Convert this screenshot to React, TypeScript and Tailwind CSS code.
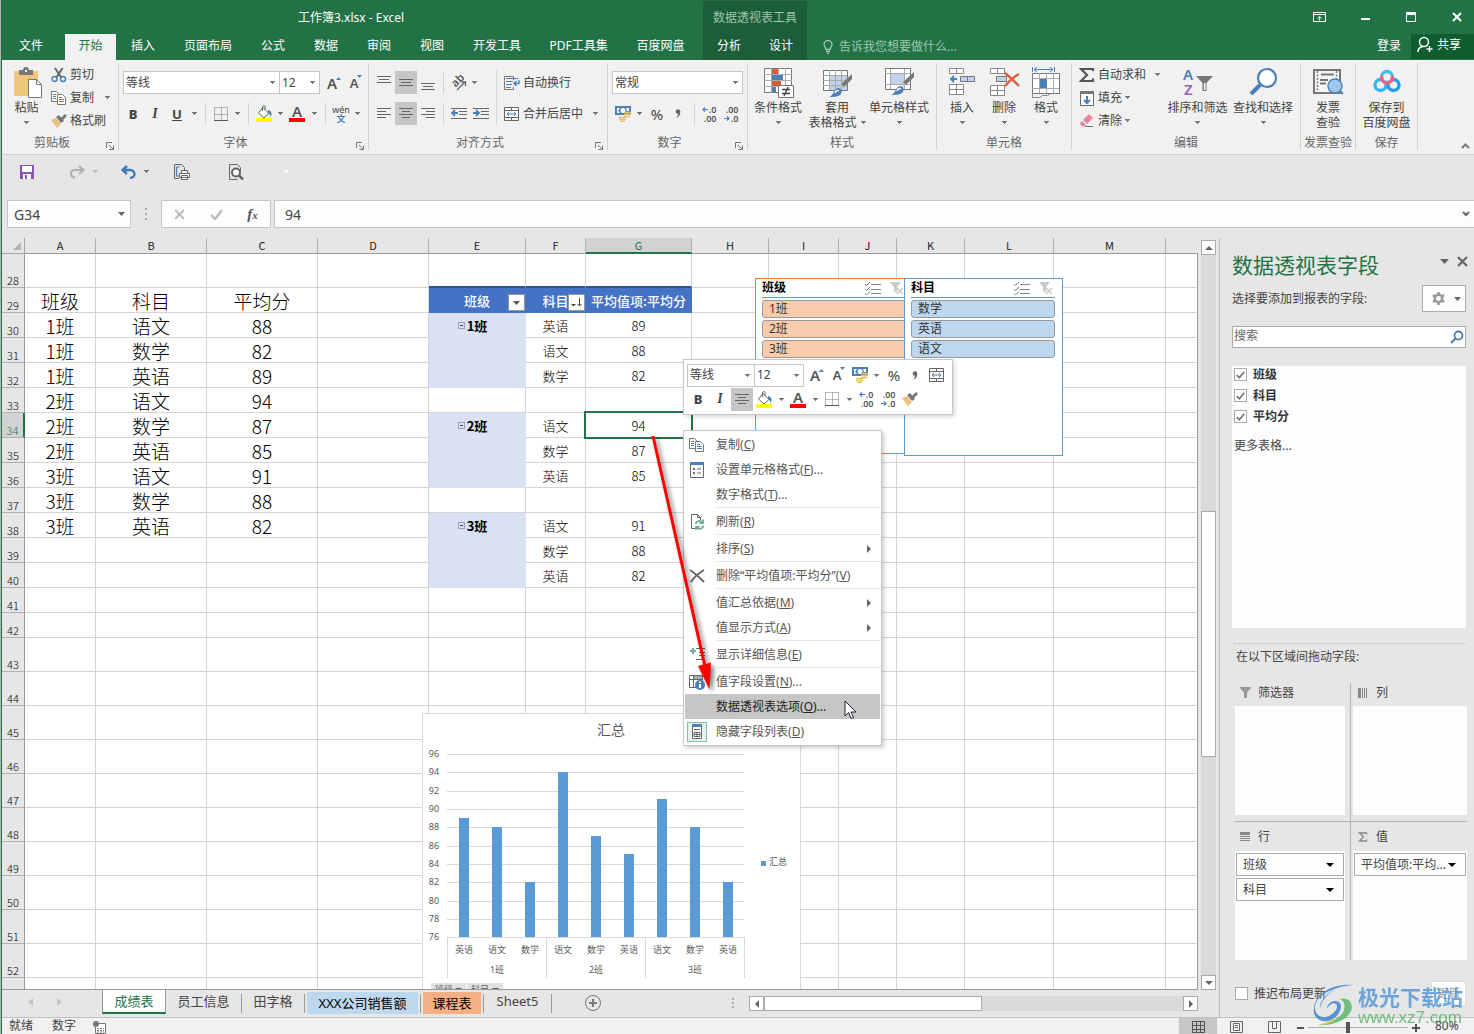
import { Fragment } from 'react';
import type { ReactNode } from 'react';

interface BoxProps {
  className?: string;
  children?: ReactNode;
}

/* ---------- small drawing helpers ---------- */

function Svg({ w = 16, h = 16, children, className = '' }: { w?: number; h?: number; children: ReactNode; className?: string }) {
  return (
    <svg width={w} height={h} viewBox={`0 0 ${w} ${h}`} fill="none" className={`shrink-0 ${className}`} aria-hidden="true">
      {children}
    </svg>
  );
}

function Caret({ className = 'text-[#777]' }: { className?: string }) {
  return (
    <svg width="5" height="3" viewBox="0 0 5 3" className={`shrink-0 ${className}`} shapeRendering="crispEdges" aria-hidden="true">
      <path d="M0 0h5v1H4v1H3v1H2V2H1V1H0z" fill="currentColor" />
    </svg>
  );
}

function BigCaret({ className = 'text-[#666]' }: { className?: string }) {
  return (
    <svg width="9" height="5" viewBox="0 0 9 5" className={`shrink-0 ${className}`} aria-hidden="true">
      <path d="M0 0h9L4.500 5z" fill="currentColor" />
    </svg>
  );
}

const PasteIcon = () => (
  <Svg w={32} h={32}>
    <path d="M3 4h24v25H3z" fill="#eec77d" />
    <path d="M8 3h4c0-4 6-4 6 0h4v5H8z" fill="#777" />
    <path d="M14 3h2v2h-2z" fill="#f1f1f1" />
    <path d="M17.500 12.500h8l5 5v13h-13z" fill="#fff" stroke="#777" />
    <path d="M25.500 12.500v5h5" stroke="#777" />
  </Svg>
);

const CutIcon = () => (
  <Svg>
    <path d="M4 1l6.500 10M11.500 1L5 11" stroke="#666" strokeWidth="2" />
    <circle cx="3.500" cy="12" r="2.500" stroke="#4a7fb8" strokeWidth="1.400" />
    <circle cx="12" cy="12" r="2.500" stroke="#4a7fb8" strokeWidth="1.400" />
  </Svg>
);

const CopyIcon = () => (
  <Svg>
    <path d="M.5 1.500h5l2 2v8h-7z" fill="#fff" stroke="#777" />
    <path d="M2 4.500h3M2 6.500h3M2 8.500h3" stroke="#4a7fb8" />
    <path d="M6.500 4.500h5l3 3v7h-8z" fill="#fff" stroke="#777" />
    <path d="M8 7.500h3M8 9.500h5M8 11.500h5" stroke="#4a7fb8" />
  </Svg>
);

const BrushIcon = () => (
  <Svg>
    <path d="M0 7l5-2 5 6-4 4z" fill="#eec07c" />
    <path d="M5 4l3-2 5 6-3 2z" fill="#777" />
    <path d="M10 5l4-4 2 2-4 4z" fill="#777" />
  </Svg>
);

const FontSizeIcon = ({ up }: { up: boolean }) => (
  <span className="relative pr-1 text-[#555]">
    <span className={up ? 'text-[15px] leading-5 font-semibold' : 'text-[13px] leading-6 font-semibold'}>A</span>
    <svg width="5" height="3" viewBox="0 0 5 3" className="absolute right-0 top-1" aria-hidden="true">
      <path d={up ? 'M0 3h5L2.500 0z' : 'M0 0h5L2.500 3z'} fill="#4a7fb8" />
    </svg>
  </span>
);

const BorderIcon = () => (
  <Svg w={14} h={14}>
    <path d="M.5.5h13v13M.5.5v13M7.500.5v13M.5 7.500h13" stroke="#777" strokeDasharray="1 1" />
    <path d="M0 13.500h14" stroke="#555" />
  </Svg>
);

const BucketIcon = () => (
  <Svg w={16} h={17}>
    <path d="M7 2.500l6 6-5 4.500-5.500-5z" fill="#fff" stroke="#666" />
    <path d="M6.500 6V1.500C7 .3 9 .3 9 1.500V5" stroke="#666" />
    <path d="M12 5c4 1 4 4 3 7-1-2-1-3-3-4z" fill="#4a7fb8" />
    <path d="M0 13h16v4H0z" fill="#ff0" />
  </Svg>
);

const FontColorIcon = () => (
  <span className="flex flex-col items-center">
    <span className="text-[15px] leading-[13px] font-semibold text-[#555]">A</span>
    <span className="h-1 w-4 bg-[#f00]" />
  </span>
);

const PhoneticIcon = () => (
  <span className="flex flex-col items-center text-[9px] leading-[9px]">
    <span className="text-[#444]">wén</span>
    <span className="font-bold text-[#4a7fb8]">文</span>
  </span>
);

const LinesIcon = ({ kind }: { kind: 'top' | 'middle' | 'bottom' | 'left' | 'center' | 'right' }) => {
  const paths = {
    top: 'M0 2.500h14M2 5.500h10M0 8.500h14',
    middle: 'M0 5.500h14M2 8.500h10M0 11.500h14',
    bottom: 'M0 9.500h14M2 12.500h10M0 15.500h14',
    left: 'M0 3.500h14M0 6.500h9M0 9.500h14M0 12.500h9',
    center: 'M0 3.500h14M3 6.500h8M0 9.500h14M3 12.500h8',
    right: 'M0 3.500h14M5 6.500h9M0 9.500h14M5 12.500h9',
  };
  return (
    <Svg w={14} h={17}>
      <path d={paths[kind]} stroke="#666" />
    </Svg>
  );
};

const OrientationIcon = () => (
  <Svg className="overflow-visible">
    <text x="1" y="10" fontSize="11" fill="#555" fontWeight="600" transform="rotate(-45 6 7)">ab</text>
    <path d="M6 15L14 7M10.500 7H14.500v4" stroke="#666" strokeWidth="1.300" />
  </Svg>
);

const IndentIcon = ({ out }: { out: boolean }) => (
  <Svg>
    <path d="M0 2.500h16M8 5.500h8M8 8.500h8M0 12.500h16" stroke="#666" />
    <path d={out ? 'M7 7H1M4 4L1 7l3 3' : 'M0 7h6M3 4l3 3-3 3'} stroke="#4a7fb8" strokeWidth="1.800" />
  </Svg>
);

const WrapIcon = () => (
  <Svg>
    <path d="M.5 5V1.500h9V5M.5 5.500v9h9V12" stroke="#777" />
    <path d="M2 3.500h12M2 6.500h7M2 9.500h6M2 12.500h5" stroke="#4a7fb8" />
    <path d="M15 5v3.500H10M12.500 6L10 8.500l2.500 2.500" stroke="#4a7fb8" strokeWidth="1.400" />
  </Svg>
);

const MergeIcon = () => (
  <Svg>
    <path d="M.5 1.500h14v13H.5zM.5 4.500h14M.5 11.500h14M7.500 1v3.500M7.500 11.500v3" fill="#fff" stroke="#666" />
    <path d="M3 8h9M5 6L3 8l2 2M10 6l2 2-2 2" stroke="#4a7fb8" />
  </Svg>
);

const MoneyIcon = () => (
  <Svg>
    <path d="M0 0h16v9H0z" fill="#4a7fb8" />
    <path d="M2 2h3L3 4.500 5 7H2zM11 2h3v3h-2z" fill="#fff" />
    <circle cx="8" cy="4.500" r="2.500" fill="#fff" />
    <path d="M9 6.500h7M9 8.500h7M9 10.500h6M4 11.500h7M4 13.500h7M5 15.500h5" stroke="#e8bd74" strokeWidth="1.700" />
  </Svg>
);

const DecimalIcon = ({ more }: { more: boolean }) => (
  <span className="relative flex w-[15px] flex-col items-end text-[9px] leading-[9px] font-semibold text-[#555]">
    <span>{more ? '.0' : '.00'}</span>
    <span>{more ? '.00' : '.0'}</span>
    <svg width="6" height="5" viewBox="0 0 6 5" fill="none" className={more ? 'absolute left-0 top-[2px]' : 'absolute bottom-[2px] left-0'} aria-hidden="true">
      <path d={more ? 'M6 2.500H1M3 .5l-2 2 2 2' : 'M0 2.500h5M3 .5l2 2-2 2'} stroke="#4a7fb8" strokeWidth="1.200" />
    </svg>
  </span>
);

const CondFormatIcon = () => (
  <Svg w={32} h={32}>
    <path d="M2.500 1.500h27v24h-27z" fill="#fff" stroke="#777" />
    <path d="M2 7.500h28M2 13.500h28M2 19.500h28M9.500 1v25M16.500 1v25M23.500 1v25" stroke="#aaa" />
    <path d="M10 2h6v5h-6zM10 14h9v5h-9z" fill="#d35f3c" />
    <path d="M10 8h11v5H10zM10 20h4v5h-4z" fill="#4a7fb8" />
    <path d="M16.500 18.500h15v12h-15z" fill="#fff" stroke="#777" />
    <path d="M20 22.500h8M20 26.500h8M26 20l-4 9" stroke="#444" strokeWidth="1.300" />
  </Svg>
);

const StyleBrush = () => (
  <>
    <path d="M31 7v5l-8 8-3-3z" fill="#777" />
    <path d="M20 17l3 3-2 2-3-3z" fill="#bbb" />
    <path d="M8 30c5-1 4-8 9-9 4 0 5 4 2 7-3 2-7 2-11 2z" fill="#4a7fb8" />
    <path d="M14 26c1-3 3-3 4-2" stroke="#fff" strokeWidth="1.500" />
  </>
);

const TableFormatIcon = () => (
  <Svg w={32} h={32}>
    <path d="M2.500 3.500h24v20h-24z" fill="#fff" stroke="#777" />
    <path d="M9 9h17v14H9z" fill="#c0d3ea" />
    <path d="M2 8.500h24M2 13.500h24M2 18.500h24M8.500 3v20M14.500 3v20M20.500 3v20" stroke="#aaa" />
    <StyleBrush />
  </Svg>
);

const CellStyleIcon = () => (
  <Svg w={32} h={32}>
    <path d="M2.500 1.500h25v21h-25z" fill="#fff" stroke="#777" />
    <path d="M2 6.500h25M2 17.500h25M7.500 2v20M21.500 2v20" stroke="#aaa" />
    <path d="M8 7h13v10H8z" fill="#c0d3ea" />
    <g transform="translate(0 -2)">
      <StyleBrush />
    </g>
  </Svg>
);

const InsertIcon = () => (
  <Svg w={32} h={32}>
    <path d="M3.500 1.500h14v5h-14zM10.500 1.500v5M3.500 17.500h14v10h-14zM10.500 17.500v10M3.500 22.500h14" fill="#fff" stroke="#888" />
    <path d="M14.500 9.500h14v5h-14zM21.500 9.500v5" fill="#c0d3ea" stroke="#777" />
    <path d="M11 12H5M8 9l-3 3 3 3" stroke="#4a7fb8" strokeWidth="1.800" />
  </Svg>
);

const DeleteIcon = () => (
  <Svg w={32} h={32}>
    <path d="M2.500 1.500h14v5h-14zM9.500 1.500v5M2.500 18.500h14v10h-14zM9.500 18.500v10M2.500 23.500h14" fill="#fff" stroke="#888" />
    <path d="M8.500 9.500h10v5h-10z" fill="#c0d3ea" stroke="#777" />
    <path d="M17 6c5 4 9 8 14 13M31 7c-6 3-10 7-14 12" stroke="#d9603f" strokeWidth="2.400" />
  </Svg>
);

const FormatIcon = () => (
  <Svg w={32} h={32}>
    <path d="M2.500 0v5M24.500 0v5M4 2.500h19M7 0L4 2.500 7 5M20 0l3 2.500L20 5" stroke="#4a7fb8" />
    <path d="M2.500 6.500h27v20h-27z" fill="#fff" stroke="#777" />
    <path d="M2 11.500h27M2 21.500h27M9.500 6v20M16.500 6v20M23.500 6v20" stroke="#aaa" />
    <path d="M10 12h7v9h-7z" fill="#4a7fb8" />
    <path d="M2.500 27v3.500h7l3-2h5l3-2" stroke="#888" />
  </Svg>
);

const SumIcon = () => (
  <Svg>
    <path d="M14 4V2H2l6 6-6 6h12v-2.500" stroke="#555" strokeWidth="2.200" />
  </Svg>
);

const FillIcon = () => (
  <Svg>
    <path d="M1.500 1.500h13v14h-13z" fill="#fff" stroke="#666" />
    <path d="M1 1h14v3H1z" fill="#777" />
    <path d="M8 6v7M5 10l3 3 3-3" stroke="#4a7fb8" strokeWidth="2" />
  </Svg>
);

const EraserIcon = () => (
  <Svg>
    <path d="M4 7l6-6 4 4-6 6z" fill="#e5879a" />
    <path d="M3 8l4 4-1.500 1.500h-2L1 11v-1z" fill="#e5879a" />
    <path d="M6 13.500h8" stroke="#777" />
  </Svg>
);

const SortFilterIcon = () => (
  <Svg w={32} h={32} className="overflow-visible">
    <text x="1" y="13" fontSize="15" fontWeight="600" fill="#4a7fb8">A</text>
    <text x="2" y="28" fontSize="15" fontWeight="600" fill="#9a5fbb">Z</text>
    <path d="M14 9h17l-6.500 7v8h-4v-8z" fill="#777" />
    <path d="M22 16h1.500v7H22z" fill="#fff" />
  </Svg>
);

const FindIcon = () => (
  <Svg w={32} h={32}>
    <circle cx="20" cy="11" r="9" fill="#fff" stroke="#4a7fb8" strokeWidth="2.200" />
    <path d="M13 18L4 27" stroke="#4a7fb8" strokeWidth="4" />
  </Svg>
);

const InvoiceIcon = () => (
  <Svg w={32} h={32}>
    <path d="M2 3h26v23H2z" fill="#f6f6f6" stroke="#777" strokeWidth="2" />
    <path d="M5.500 4v22M24.500 4v22" stroke="#777" strokeWidth="1.500" strokeDasharray="2 1.500" />
    <path d="M9 7.500h13M8 13h8M8 16.500h6" stroke="#777" strokeWidth="2" />
    <circle cx="23" cy="19" r="7" fill="#9fc6ef" stroke="#4a86ba" strokeWidth="1.500" />
    <path d="M28 24l3 3" stroke="#4a86ba" strokeWidth="2" />
  </Svg>
);

const NetdiskIcon = () => (
  <Svg w={32} h={32}>
    <circle cx="9.500" cy="18" r="5.500" stroke="#35b6f2" strokeWidth="3.400" />
    <circle cx="22.500" cy="18" r="5.500" stroke="#1e9df5" strokeWidth="3.400" />
    <circle cx="16" cy="10" r="5.500" fill="#f1f1f1" stroke="#3fc0ee" strokeWidth="3.400" />
    <path d="M10.700 9a5.500 5.500 0 1 0 10.600 0" stroke="#f4617c" strokeWidth="3.400" />
  </Svg>
);

const SearchIcon = () => (
  <Svg w={14} h={14}>
    <circle cx="8.500" cy="5.500" r="4" stroke="#4a7fb8" strokeWidth="1.800" />
    <path d="M5.500 8.500L1 13" stroke="#4a7fb8" strokeWidth="2.200" />
  </Svg>
);

/* ---------- title bar and tabs ---------- */

const tabs = ['插入', '页面布局', '公式', '数据', '审阅', '视图', '开发工具'];

function Header() {
  return (
    <header className="shrink-0 bg-[#217346] text-white">
      <div className="flex h-[34px] items-center">
        <div className="w-[701px] shrink-0 pl-[296px] pt-px">工作簿3.xlsx - Excel</div>
        <div className="mt-px flex h-[33px] w-[104px] shrink-0 items-center justify-center bg-[#1c5e38] text-[#9fc5ad]">数据透视表工具</div>
        <div className="flex-1" />
        <button aria-label="功能区显示选项" className="flex w-[46px] justify-center">
          <Svg w={13} h={10}>
            <path d="M.5.500h12v9H.5zM.5 2.500h12M6.500 8.500v-4M4.500 6.500l2-2 2 2" stroke="#fff" />
          </Svg>
        </button>
        <button aria-label="最小化" className="flex w-[46px] justify-center"><span className="mt-1 h-0.5 w-[9px] bg-white" /></button>
        <button aria-label="最大化" className="flex w-[46px] justify-center"><span className="h-[10px] w-[10px] border border-t-[3px] border-white" /></button>
        <button aria-label="关闭" className="ml-[6px] flex w-[34px] justify-center">
          <Svg w={10} h={10}>
            <path d="M1 1l8 8M9 1L1 9" stroke="#fff" strokeWidth="2" />
          </Svg>
        </button>
      </div>
      <nav className="flex h-[26px]">
        <button className="w-[63px] shrink-0 pb-[3px] pl-[17px] text-left">文件</button>
        <button className="w-[51px] shrink-0 bg-[#f1f1f1] pb-[3px] text-[#217346]">开始</button>
        {tabs.map((tab) => (
          <button key={tab} className="shrink-0 pb-[3px] pl-[15px] pr-[14px]">{tab}</button>
        ))}
        <button className="w-[87px] shrink-0 pb-[3px]">PDF工具集</button>
        <button className="w-[81px] shrink-0 pb-[3px] pr-1">百度网盘</button>
        <button className="w-[52px] shrink-0 bg-[#1c5e38] pb-[3px]">分析</button>
        <button className="w-[52px] shrink-0 bg-[#1c5e38] pb-[3px]">设计</button>
        <button className="ml-4 flex items-center gap-[6px] text-[#9fc5ad]">
          <Svg w={10} h={14}>
            <path d="M3 9.500C3 7.500 1 7 1 4.500a4 4 0 0 1 8 0C9 7 7 7.500 7 9.500zM3 11.500h4M4 13.500h2" stroke="#9fc5ad" strokeWidth="1.300" />
          </Svg>
          告诉我您想要做什么...
        </button>
        <div className="flex-1" />
        <button className="pb-[3px] pr-[10px]">登录</button>
        <button className="mb-px flex w-[63px] shrink-0 items-center gap-1 bg-[#0f5c2f] pb-1 pl-[6px]">
          <Svg w={16} h={17}>
            <circle cx="7" cy="6" r="4.500" stroke="#fff" strokeWidth="1.500" />
            <path d="M1 16c0-3 2-5 5-5.500M12.500 10v6M9.500 13h6" stroke="#fff" strokeWidth="1.500" />
          </Svg>
          共享
        </button>
      </nav>
    </header>
  );
}

/* ---------- ribbon ---------- */

function Group({ label, width, launcher = false, children }: { label: string; width: string; launcher?: boolean; children: ReactNode }) {
  return (
    <section className={`mb-1 mt-[3px] flex shrink-0 flex-col border-r border-[#d2d2d2] ${width}`}>
      <div className="flex h-[72px]">{children}</div>
      <div className="flex h-4 items-end">
        <span className="flex-1 whitespace-nowrap text-center leading-[14px] text-[#666]">{label}</span>
        {launcher && (
          <button aria-label={`${label}设置`} className="ml-1 mr-1">
            <Svg w={8} h={8}>
              <path d="M.5 6V.500H6M3 3l4 4M7.500 3.500v4h-4" stroke="#777" />
            </Svg>
          </button>
        )}
      </div>
    </section>
  );
}

function BigButton({ icon, lines, width, caret = true }: { icon: ReactNode; lines: string[]; width: string; caret?: boolean }) {
  return (
    <button className={`flex shrink-0 flex-col items-center whitespace-nowrap pt-1 leading-[15px] ${width}`}>
      {icon}
      <span className="mt-px">{lines[0]}</span>
      <span className="flex h-[15px] items-center gap-1">
        {lines[1]}
        {caret && <Caret />}
      </span>
    </button>
  );
}

function SmallButton({ icon, label, children }: { icon: ReactNode; label: string; children?: ReactNode }) {
  return (
    <button className="flex h-[23px] items-center gap-[3px] whitespace-nowrap">
      {icon}
      {label}
      {children}
    </button>
  );
}

function Tool({ label, className = 'w-[22px]', children }: BoxProps & { label: string }) {
  return (
    <button aria-label={label} className={`flex h-[23px] shrink-0 items-center justify-center ${className}`}>
      {children}
    </button>
  );
}

function Combo({ label, value, className }: { label: string; value: string; className: string }) {
  return (
    <span className={`relative flex h-[23px] shrink-0 items-center border border-[#c6c6c6] bg-white ${className}`}>
      <select aria-label={label} className="h-full w-full appearance-none bg-transparent pl-0.5 pr-4 leading-4 outline-none">
        <option>{value}</option>
      </select>
      <span className="pointer-events-none absolute right-1"><Caret /></span>
    </span>
  );
}

const Sep = ({ className }: { className: string }) => <span className={`h-[22px] w-px shrink-0 bg-[#d2d2d2] ${className}`} />;

const Bold = () => <span className="text-[13px] font-extrabold text-[#444]">B</span>;
const Italic = () => <span className="font-['Liberation_Serif',serif] text-[14px] font-bold italic text-[#444]">I</span>;
const Percent = () => <span className="text-[15px] text-[#444]">%</span>;
const Comma = () => (
  <Svg w={6} h={9}>
    <circle cx="3" cy="2.500" r="2.300" fill="#666" />
    <path d="M5.300 2.500C5.300 6 4 8 1 9c1.500-1.500 2-3 2-4.500z" fill="#666" />
  </Svg>
);

function Ribbon() {
  return (
    <div className="flex h-[95px] shrink-0 border-b border-[#d2d2d2] bg-[#f1f1f1] text-[#444]">
      <Group label="剪贴板" width="w-[117px]" launcher>
        <BigButton icon={<PasteIcon />} lines={['粘贴']} width="w-[49px]" />
        <div className="flex flex-col">
          <SmallButton icon={<CutIcon />} label="剪切" />
          <SmallButton icon={<CopyIcon />} label="复制"><span className="ml-2"><Caret /></span></SmallButton>
          <SmallButton icon={<BrushIcon />} label="格式刷" />
        </div>
      </Group>

      <Group label="字体" width="w-[250px]" launcher>
        <div className="flex flex-col gap-2 pt-2">
          <div className="flex pl-1">
            <Combo label="字体" value="等线" className="w-[157px]" />
            <Combo label="字号" value="12" className="-ml-px mr-[3px] w-[41px]" />
            <Tool label="增大字号"><FontSizeIcon up /></Tool>
            <Tool label="减小字号"><FontSizeIcon up={false} /></Tool>
          </div>
          <div className="flex items-center pl-[3px]">
            <Tool label="加粗"><Bold /></Tool>
            <Tool label="倾斜"><Italic /></Tool>
            <Tool label="下划线"><span className="text-[13px] font-bold underline">U</span></Tool>
            <Tool label="下划线选项" className="w-3"><Caret /></Tool>
            <Sep className="mx-[5px]" />
            <Tool label="边框" className="w-5"><BorderIcon /></Tool>
            <Tool label="边框选项" className="w-3"><Caret /></Tool>
            <Sep className="mx-[5px]" />
            <Tool label="填充颜色" className="w-5"><BucketIcon /></Tool>
            <Tool label="填充颜色选项" className="w-3"><Caret /></Tool>
            <Tool label="字体颜色"><FontColorIcon /></Tool>
            <Tool label="字体颜色选项" className="w-3"><Caret /></Tool>
            <Sep className="mx-[5px]" />
            <Tool label="拼音" className="w-5"><PhoneticIcon /></Tool>
            <Tool label="拼音选项" className="w-3"><Caret /></Tool>
          </div>
        </div>
      </Group>

      <Group label="对齐方式" width="w-[239px]" launcher>
        <div className="flex w-[127px] flex-col gap-2 pl-1 pt-2">
          <div className="flex items-center">
            <Tool label="顶端对齐"><LinesIcon kind="top" /></Tool>
            <Tool label="垂直居中" className="w-[22px] bg-[#c6c6c6]"><LinesIcon kind="middle" /></Tool>
            <Tool label="底端对齐"><LinesIcon kind="bottom" /></Tool>
            <Sep className="mx-1" />
            <Tool label="方向"><OrientationIcon /></Tool>
            <Tool label="方向选项" className="w-2"><Caret /></Tool>
          </div>
          <div className="flex items-center">
            <Tool label="左对齐"><LinesIcon kind="left" /></Tool>
            <Tool label="居中" className="w-[22px] bg-[#c6c6c6]"><LinesIcon kind="center" /></Tool>
            <Tool label="右对齐"><LinesIcon kind="right" /></Tool>
            <Sep className="mx-1" />
            <Tool label="减少缩进量"><IndentIcon out /></Tool>
            <Tool label="增加缩进量"><IndentIcon out={false} /></Tool>
          </div>
        </div>
        <span className="mt-[7px] h-[55px] w-px bg-[#d9d9d9]" />
        <div className="flex flex-col gap-2 pl-[7px] pt-2">
          <SmallButton icon={<WrapIcon />} label="自动换行" />
          <SmallButton icon={<MergeIcon />} label="合并后居中"><span className="ml-[7px]"><Caret /></span></SmallButton>
        </div>
      </Group>

      <Group label="数字" width="w-[140px]" launcher>
        <div className="flex flex-col gap-2 pl-1 pt-2">
          <Combo label="数字格式" value="常规" className="w-[131px]" />
          <div className="flex items-center">
            <Tool label="会计数字格式"><MoneyIcon /></Tool>
            <Tool label="会计数字格式选项" className="w-[10px]"><Caret /></Tool>
            <Tool label="百分比样式" className="w-[26px]"><Percent /></Tool>
            <Tool label="千位分隔样式" className="w-4"><Comma /></Tool>
            <Sep className="ml-2 mr-[3px]" />
            <Tool label="增加小数位数"><DecimalIcon more /></Tool>
            <Tool label="减少小数位数"><DecimalIcon more={false} /></Tool>
          </div>
        </div>
      </Group>

      <Group label="样式" width="w-[189px]">
        <BigButton icon={<CondFormatIcon />} lines={['条件格式']} width="w-[60px]" />
        <BigButton icon={<TableFormatIcon />} lines={['套用', '表格格式']} width="w-[58px]" />
        <BigButton icon={<CellStyleIcon />} lines={['单元格样式']} width="w-[66px]" />
      </Group>

      <Group label="单元格" width="w-[135px]">
        <div className="flex pl-1">
          <BigButton icon={<InsertIcon />} lines={['插入']} width="w-[42px]" />
          <BigButton icon={<DeleteIcon />} lines={['删除']} width="w-[42px]" />
          <BigButton icon={<FormatIcon />} lines={['格式']} width="w-[42px]" />
        </div>
      </Group>

      <Group label="编辑" width="w-[229px]">
        <div className="flex w-[93px] flex-col pl-[7px]">
          <SmallButton icon={<SumIcon />} label="自动求和"><span className="ml-[6px]"><Caret /></span></SmallButton>
          <SmallButton icon={<FillIcon />} label="填充"><Caret /></SmallButton>
          <SmallButton icon={<EraserIcon />} label="清除"><Caret /></SmallButton>
        </div>
        <BigButton icon={<SortFilterIcon />} lines={['排序和筛选']} width="w-[65px]" />
        <BigButton icon={<FindIcon />} lines={['查找和选择']} width="w-[66px]" />
      </Group>

      <Group label="发票查验" width="w-[55px]">
        <BigButton icon={<InvoiceIcon />} lines={['发票', '查验']} width="w-[54px]" caret={false} />
      </Group>

      <Group label="保存" width="w-[62px]">
        <BigButton icon={<NetdiskIcon />} lines={['保存到', '百度网盘']} width="w-[61px]" caret={false} />
      </Group>

      <div className="flex flex-1 items-end justify-end pb-[5px] pr-1">
        <button aria-label="折叠功能区">
          <Svg w={9} h={6}>
            <path d="M1 5l3.500-3.500L8 5" stroke="#777" strokeWidth="2" />
          </Svg>
        </button>
      </div>
    </div>
  );
}

/* ---------- quick access and formula bar ---------- */

function QuickAccess() {
  return (
    <div className="flex h-[45px] shrink-0 items-start pl-[17px] pt-[5px]">
      <Tool label="保存" className="w-4">
        <Svg w={14} h={14}>
          <path d="M0 0h14v14H0z" fill="#8a55ac" />
          <path d="M2 1h10v6H2zM3 9h8v5H3z" fill="#fff" />
          <path d="M5 10h2v4H5z" fill="#8a55ac" />
        </Svg>
      </Tool>
      <Tool label="恢复" className="ml-[34px] w-4 text-[#b1b1b1]">
        <Svg w={15} h={14}>
          <path d="M9 1l4.500 4L9 9M13 5H5C0 5-1 12 5 12.500" stroke="currentColor" strokeWidth="2.200" />
        </Svg>
      </Tool>
      <Tool label="恢复选项" className="ml-[2px] w-4"><Caret className="text-[#b9b9b9]" /></Tool>
      <Tool label="撤消" className="ml-[17px] w-4">
        <Svg w={15} h={14}>
          <path d="M6 1L1.500 5 6 9M2 5h7c6 0 6 8 0 8" stroke="#3d7ab5" strokeWidth="2.400" />
        </Svg>
      </Tool>
      <Tool label="撤消选项" className="ml-[2px] w-4"><Caret /></Tool>
      <Tool label="打印" className="ml-5 w-4">
        <Svg>
          <path d="M.5.500h7l3 3V7M.5.500v14H5" stroke="#666" />
          <path d="M2.500 3v9H6M2.500 3H6" stroke="#4a7fb8" strokeWidth="1.200" />
          <path d="M5.500 9.500h10v4h-10zM7.500 6.500h6v3h-6zM7.500 11.500h6v4h-6z" fill="#fff" stroke="#666" />
        </Svg>
      </Tool>
      <Tool label="打印预览" className="ml-[38px] w-4">
        <Svg>
          <path d="M1.500.500h8l3 3v4M1.500.500v15h8" stroke="#666" />
          <circle cx="8" cy="8.500" r="4" fill="#fff" stroke="#666" strokeWidth="2" />
          <path d="M11 11.500l4 4" stroke="#666" strokeWidth="2.500" />
        </Svg>
      </Tool>
      <Tool label="自定义快速访问工具栏" className="ml-[34px] w-4"><Caret className="text-white" /></Tool>
    </div>
  );
}

function FormulaBar() {
  return (
    <div className="mb-[10px] flex h-7 shrink-0 text-[14px] text-[#444]">
      <div className="relative ml-[5px] w-[124px]">
        <input aria-label="名称框" defaultValue="G34" className="h-full w-full border border-[#c6c6c6] bg-[#fdfdfd] pl-[6px] outline-none" />
        <button aria-label="名称框选项" className="absolute right-[6px] top-3">
          <svg width="7" height="4" viewBox="0 0 7 4" aria-hidden="true"><path d="M0 0h7L3.500 4z" fill="#666" /></svg>
        </button>
      </div>
      <div className="flex w-[30px] flex-col items-center justify-center gap-[3px]">
        {[0, 1, 2].map((n) => <span key={n} className="size-[2px] bg-[#aaa]" />)}
      </div>
      <div className="flex w-[110px] items-center justify-around border border-[#c6c6c6] bg-[#fdfdfd]">
        <button aria-label="取消">
          <Svg w={11} h={11}><path d="M1 1l9 9M10 1l-9 9" stroke="#bbb" strokeWidth="1.800" /></Svg>
        </button>
        <button aria-label="输入">
          <Svg w={13} h={11}><path d="M1 6l4 4 7-9" stroke="#bbb" strokeWidth="2.400" /></Svg>
        </button>
        <button aria-label="插入函数" className="font-['Liberation_Serif',serif] text-[15px] font-bold italic leading-4 text-[#555]">
          f<span className="text-[11px]">x</span>
        </button>
      </div>
      <div className="relative ml-[3px] flex-1">
        <input aria-label="编辑栏" defaultValue="94" className="h-full w-full border border-r-0 border-[#c6c6c6] bg-[#fdfdfd] pl-[10px] outline-none" />
        <button aria-label="展开编辑栏" className="absolute right-1 top-[11px]">
          <Svg w={8} h={6}><path d="M1 1l3 3 3-3" stroke="#666" strokeWidth="2" /></Svg>
        </button>
      </div>
    </div>
  );
}

/* ---------- worksheet ---------- */

const columns = [
  { id: 'A', width: 'w-[71px]' },
  { id: 'B', width: 'w-[111px]' },
  { id: 'C', width: 'w-[111px]' },
  { id: 'D', width: 'w-[111px]' },
  { id: 'E', width: 'w-[97px]' },
  { id: 'F', width: 'w-[60px]' },
  { id: 'G', width: 'w-[106px]' },
  { id: 'H', width: 'w-[77px]' },
  { id: 'I', width: 'w-[70px]' },
  { id: 'J', width: 'w-[58px]' },
  { id: 'K', width: 'w-[68px]' },
  { id: 'L', width: 'w-[89px]' },
  { id: 'M', width: 'w-[112px]' },
  { id: '', width: '' },
];

const data: Record<number, string[]> = {
  29: ['班级', '科目', '平均分', '', '班级', '科目', '平均值项:平均分'],
  30: ['1班', '语文', '88', '', '1班', '英语', '89'],
  31: ['1班', '数学', '82', '', '', '语文', '88'],
  32: ['1班', '英语', '89', '', '', '数学', '82'],
  33: ['2班', '语文', '94'],
  34: ['2班', '数学', '87', '', '2班', '语文', '94'],
  35: ['2班', '英语', '85', '', '', '数学', '87'],
  36: ['3班', '语文', '91', '', '', '英语', '85'],
  37: ['3班', '数学', '88'],
  38: ['3班', '英语', '82', '', '3班', '语文', '91'],
  39: ['', '', '', '', '', '数学', '88'],
  40: ['', '', '', '', '', '英语', '82'],
};

const rowNumbers = Array.from({ length: 26 }, (_, i) => 28 + i);

function cellClass(row: number, col: number) {
  if (col > 3 && col < 7) {
    if (row === 28) return 'border-b-2 border-r-[#d4d4d4] border-b-[#2f5597]';
    if (row === 29) return 'border-[#4472c4] bg-[#4472c4] text-[13px] font-medium text-white';
  }
  const pivotRow = row >= 30 && row <= 40 && row !== 33 && row !== 37;
  if (col === 4 && pivotRow) return 'border-[#d9e1f2] bg-[#d9e1f2] text-[13px] font-bold';
  if (col > 4) return 'border-[#d4d4d4] text-[13px] font-light';
  return 'border-[#d4d4d4] text-[19px] font-light';
}

function CellContent({ row, col, text }: { row: number; col: number; text: string }) {
  if (row === 29 && (col === 4 || col === 5)) {
    return (
      <span className="relative block">
        {text}
        <button aria-label={`筛选${text}`} className="absolute right-0 top-1 flex size-[17px] items-center justify-center border border-[#999] bg-white">
          {col === 4 ? (
            <svg width="7" height="4" viewBox="0 0 7 4" aria-hidden="true"><path d="M0 0h7L3.500 4z" fill="#555" /></svg>
          ) : (
            <Svg w={11} h={9}>
              <path d="M0 6h5L2.500 8.500z" fill="#444" />
              <path d="M8.500 0v8M6.500 6l2 2 2-2" stroke="#444" />
            </Svg>
          )}
        </button>
      </span>
    );
  }
  if (col === 4 && text && row > 29) {
    return (
      <span className="relative">
        <button aria-label={`折叠${text}`} className="absolute -left-[9px] top-[6px] flex size-[7px] items-center justify-center border border-[#9aa5bd]">
          <span className="h-px w-[3px] bg-[#444]" />
        </button>
        {text}
      </span>
    );
  }
  return <>{text}</>;
}

function Grid() {
  return (
    <table className="w-full table-fixed border-separate border-spacing-0 font-['Noto_Sans_CJK_SC',sans-serif] text-black">
      <colgroup>
        <col className="w-[23px]" />
        {columns.map((c) => <col key={c.id} className={c.width} />)}
      </colgroup>
      <thead>
        <tr className="h-4 bg-[#e6e6e6] text-[11px] leading-[15px] text-[#222]">
          <th aria-label="全选" className="border-b border-r border-[#a6a6a6] p-0">
            <svg width="8" height="8" viewBox="0 0 8 8" className="ml-[11px]" aria-hidden="true"><path d="M8 0v8H0z" fill="#b1b1b1" /></svg>
          </th>
          {columns.map((c, i) => (
            <th
              key={c.id}
              scope="col"
              className={
                c.id === 'G'
                  ? 'border-b-2 border-r border-b-[#217346] border-r-[#b0b0b0] bg-[#d2d2d2] p-0 font-normal leading-[14px] text-[#217346]'
                  : i === 13
                    ? 'border-b border-[#999] p-0'
                    : 'border-b border-r border-b-[#999] border-r-[#b0b0b0] p-0 font-normal'
              }
            >
              {c.id}
            </th>
          ))}
        </tr>
      </thead>
      <tbody>
        {rowNumbers.map((row) => (
          <tr key={row} className={row === 28 || row > 42 ? 'h-[34px]' : 'h-[25px]'}>
            <th
              scope="row"
              className={
                row === 34
                  ? 'border-b border-r-2 border-b-[#b1b1b1] border-r-[#217346] bg-[#d2d2d2] p-0 align-bottom text-[11px] font-light leading-[13px] text-[#217346]'
                  : 'border-b border-r border-b-[#b1b1b1] border-r-[#999] bg-[#e6e6e6] p-0 align-bottom text-[11px] font-light leading-[13px]'
              }
            >
              {row < 53 ? row : ''}
            </th>
            {columns.map((c, col) => (
              <td
                key={c.id}
                className={`whitespace-nowrap border-b border-r p-0 pt-[2px] text-center leading-[22px] ${cellClass(row, col)} ${col === 13 ? 'border-r-[#999]' : ''}`}
              >
                <CellContent row={row} col={col} text={data[row]?.[col] ?? ''} />
              </td>
            ))}
          </tr>
        ))}
      </tbody>
    </table>
  );
}

interface SlicerProps {
  title: string;
  items: string[];
  frame: string;
  line: string;
  fill: string;
}

function Slicer({ title, items, frame, line, fill }: SlicerProps) {
  return (
    <section className={`absolute top-10 w-[159px] border bg-white pl-[6px] pr-[7px] ${frame}`}>
      <div className={`mb-[2px] flex h-[19px] items-center border-b font-bold text-black ${line}`}>
        <span className="flex-1">{title}</span>
        <Svg w={16} h={13} className="mr-[9px]">
          <path d="M0 2l1.500 1.500L5 0M0 7l1.500 1.500L5 5M0 11.500L1.500 13 5 9.500" stroke="#777" />
          <path d="M6 2.500h10M6 7.500h10M6 11.500h10" stroke="#888" />
        </Svg>
        <Svg w={14} h={13} className="mr-[2px]">
          <path d="M0 0h11L7 5v6L4 9V5z" fill="#c9c9c9" />
          <path d="M7 6l6 6M13 6l-6 6" stroke="#c9c9c9" strokeWidth="1.500" />
        </Svg>
      </div>
      <div className="flex flex-col gap-[2px]">
        {items.map((item) => (
          <button key={item} className={`h-[18px] rounded-[3px] border border-[#999] pl-[6px] text-left leading-4 text-[#333] ${fill}`}>{item}</button>
        ))}
      </div>
    </section>
  );
}

const bars = [
  ['英语', 89], ['语文', 88], ['数学', 82],
  ['语文', 94], ['数学', 87], ['英语', 85],
  ['语文', 91], ['数学', 88], ['英语', 82],
] as const;

function PivotChart() {
  return (
    <figure className="absolute left-[420px] top-[475px] w-[379px] border border-[#d9d9d9] bg-white">
      <svg width="377" height="290" viewBox="1 1 377 290" className="block text-[9px]" fill="#595959" textAnchor="middle">
        <text x="189" y="22" fontSize="14">汇总</text>
        {Array.from({ length: 11 }, (_, i) => {
          const y = Math.round(41 + i * 18.33);
          return (
            <Fragment key={i}>
              <path d={`M25 ${y + 0.5}h297`} stroke="#d9d9d9" />
              <text x="12" y={y + 3}>{96 - i * 2}</text>
            </Fragment>
          );
        })}
        {bars.map(([name, value], i) => {
          const h = Math.round((value - 76) * 9.17);
          return (
            <Fragment key={i}>
              <rect x={37 + i * 33} y={224 - h} width="10" height={h} fill="#5b9bd5" />
              <text x={42 + i * 33} y="240">{name}</text>
            </Fragment>
          );
        })}
        <path d="M25.500 224v41M124.500 224v41M223.500 224v41M322.500 224v41" stroke="#d9d9d9" />
        {['1班', '2班', '3班'].map((name, i) => <text key={name} x={75 + i * 99} y="260">{name}</text>)}
        <rect x="339" y="148" width="5" height="5" fill="#5b9bd5" />
        <text x="356" y="152">汇总</text>
        <rect x="9" y="270" width="35" height="14" fill="#e0e0e0" />
        <rect x="45" y="270" width="36" height="14" fill="#e0e0e0" />
        <text x="22" y="280">班级</text>
        <text x="58" y="280">科目</text>
        <path d="M33 275h7l-3.500 3zM70 275h7l-3.500 3z" />
      </svg>
    </figure>
  );
}

function MiniToolbar() {
  return (
    <div role="toolbar" aria-label="浮动工具栏" className="absolute left-[681px] top-[121px] w-[270px] border border-[#c6c6c6] bg-white px-[3px] py-[3px] text-[#444] shadow-[2px_2px_4px_rgba(0,0,0,0.15)]">
      <div className="flex h-6 items-center">
        <Combo label="浮动字体" value="等线" className="w-[68px]" />
        <Combo label="浮动字号" value="12" className="-ml-px w-[50px]" />
        <Tool label="增大字号" className="ml-[2px] w-[22px]"><FontSizeIcon up /></Tool>
        <Tool label="减小字号"><FontSizeIcon up={false} /></Tool>
        <Tool label="会计数字格式" className="w-5"><MoneyIcon /></Tool>
        <Tool label="会计数字格式选项" className="w-3"><Caret /></Tool>
        <Tool label="百分比样式" className="w-6"><Percent /></Tool>
        <Tool label="千位分隔样式" className="w-[18px]"><Comma /></Tool>
        <Tool label="合并后居中" className="w-[26px]"><MergeIcon /></Tool>
      </div>
      <div className="flex h-6 items-center">
        <Tool label="加粗"><Bold /></Tool>
        <Tool label="倾斜"><Italic /></Tool>
        <Tool label="居中" className="w-[22px] bg-[#c6c6c6]"><LinesIcon kind="center" /></Tool>
        <Tool label="填充颜色"><BucketIcon /></Tool>
        <Tool label="填充颜色选项" className="w-3"><Caret /></Tool>
        <Tool label="字体颜色"><FontColorIcon /></Tool>
        <Tool label="字体颜色选项" className="w-3"><Caret /></Tool>
        <Tool label="边框"><BorderIcon /></Tool>
        <Tool label="边框选项" className="w-3"><Caret /></Tool>
        <Tool label="增加小数位数"><DecimalIcon more /></Tool>
        <Tool label="减少小数位数"><DecimalIcon more={false} /></Tool>
        <Tool label="格式刷"><BrushIcon /></Tool>
      </div>
    </div>
  );
}

const FormatCellsIcon = () => (
  <Svg>
    <path d="M1.500.500h13v15h-13z" fill="#fff" stroke="#666" />
    <path d="M1 0h14v3H1z" fill="#4a7fb8" />
    <path d="M4 6h2v2H4zM4 10h2v2H4z" fill="#666" />
    <path d="M8 7h4M8 11h4" stroke="#666" />
  </Svg>
);

const RefreshIcon = () => (
  <Svg>
    <path d="M6 14.500H2.500v-14h6l3 3V6M8.500.500v3h3" stroke="#666" />
    <path d="M6.500 10a4 4 0 0 1 7-1.500M14.500 11.500a4 4 0 0 1-7 2M14 5.500V9h-3.500M7 16.500V13h3.500" stroke="#6fae92" strokeWidth="1.800" />
  </Svg>
);

const RemoveIcon = () => (
  <Svg>
    <path d="M1 2c5 3 9 7 14 12M15 2C10 5 5 9 2 14" stroke="#666" strokeWidth="2" />
  </Svg>
);

const DetailIcon = () => (
  <Svg>
    <path d="M1 4h6M4 1v6" stroke="#6fae92" strokeWidth="2" />
    <path d="M7 1.500h9M10 5.500h6M10 8.500h6M7 12.500h9" stroke="#666" />
  </Svg>
);

const FieldSettingsIcon = () => (
  <Svg>
    <path d="M.5 1.500h13v12H.5zM.5 5.500h13M4.500 1.500v12" fill="#fff" stroke="#666" />
    <path d="M5 2h8v3H5z" fill="#aaa" />
    <circle cx="11" cy="11" r="5" fill="#4a7fb8" />
    <path d="M11 7.500v1.500M11 10v4" stroke="#fff" strokeWidth="2" />
  </Svg>
);

const FieldListIcon = () => (
  <span className="flex size-5 items-center justify-center border border-[#86bfa4] bg-[#e6f2ec]">
    <Svg w={10} h={15}>
      <path d="M.5.500h9v14h-9zM2 5.500h6M2 8.500h6v4H2zM5 8.500v4M2 10.500h6" fill="#fff" stroke="#666" />
      <path d="M0 0h10v3H0z" fill="#4a7fb8" />
    </Svg>
  </span>
);

const menu: { text: string; mark: string; tail?: string; icon?: ReactNode; sub?: boolean; active?: boolean; line?: boolean }[] = [
  { text: '复制', mark: 'C', icon: <CopyIcon /> },
  { text: '设置单元格格式', mark: 'F', tail: '...', icon: <FormatCellsIcon /> },
  { text: '数字格式', mark: 'T', tail: '...', line: true },
  { text: '刷新', mark: 'R', icon: <RefreshIcon />, line: true },
  { text: '排序', mark: 'S', sub: true, line: true },
  { text: '删除“平均值项:平均分”', mark: 'V', icon: <RemoveIcon />, line: true },
  { text: '值汇总依据', mark: 'M', sub: true },
  { text: '值显示方式', mark: 'A', sub: true, line: true },
  { text: '显示详细信息', mark: 'E', icon: <DetailIcon />, line: true },
  { text: '值字段设置', mark: 'N', tail: '...', icon: <FieldSettingsIcon /> },
  { text: '数据透视表选项', mark: 'O', tail: '...', active: true },
  { text: '隐藏字段列表', mark: 'D', icon: <FieldListIcon /> },
];

function ContextMenu() {
  return (
    <div role="menu" className="absolute left-[681px] top-[192px] w-[199px] border border-[#c6c6c6] bg-white p-px text-[#555] shadow-[2px_2px_4px_rgba(0,0,0,0.2)]">
      {menu.map((item) => (
        <Fragment key={item.mark}>
          <button
            role="menuitem"
            className={`flex h-[25px] w-full items-center whitespace-nowrap pr-[9px] ${item.active ? 'bg-[#c6c6c6] text-[#222]' : ''}`}
          >
            <span className="flex w-[31px] shrink-0 pr-[7px]"><span className="flex w-6 justify-center">{item.icon}</span></span>
            <span className="flex-1 text-left">
              {item.text}(<u>{item.mark}</u>){item.tail}
            </span>
            {item.sub && <svg width="4" height="8" viewBox="0 0 4 8" aria-hidden="true"><path d="M0 0l4 4-4 4z" fill="#666" /></svg>}
          </button>
          {item.line && <div className="mb-px ml-8 h-px bg-[#e1e1e1]" />}
        </Fragment>
      ))}
    </div>
  );
}

function Pointer() {
  return (
    <svg width="80" height="270" viewBox="0 0 80 270" className="pointer-events-none absolute left-[641px] top-[190px] drop-shadow-[3px_3px_2px_rgba(0,0,0,0.5)]" aria-hidden="true">
      <path d="M8.500 8h3l51.500 228 5-1.500-1.500 27L55 238l5-1.500z" fill="#f00" />
    </svg>
  );
}

function MouseCursor() {
  return (
    <svg width="13" height="20" viewBox="0 0 13 20" className="pointer-events-none absolute left-[842px] top-[462px]" aria-hidden="true">
      <path d="M1 1v15l3.500-3.500L7 18.500l2.500-1L7 12h5z" fill="#fff" stroke="#223" />
    </svg>
  );
}

function ScrollButton({ label, d, className = 'size-[15px]' }: { label: string; d: string; className?: string }) {
  return (
    <button aria-label={label} className={`flex shrink-0 items-center justify-center border border-[#ababab] bg-white ${className}`}>
      <svg width="8" height="8" viewBox="0 0 8 8" aria-hidden="true"><path d={d} fill="#666" /></svg>
    </button>
  );
}

function SheetTabs() {
  return (
    <div className="flex h-[27px] shrink-0 items-start pr-[21px] text-[13px] leading-[22px] text-[#444]">
      <button aria-label="上一个工作表" className="ml-[26px] mt-2"><svg width="5" height="8" viewBox="0 0 5 8"><path d="M5 0v8L0 4z" fill="#c3c3c3" /></svg></button>
      <button aria-label="下一个工作表" className="ml-6 mt-2"><svg width="5" height="8" viewBox="0 0 5 8"><path d="M0 0v8l5-4z" fill="#c3c3c3" /></svg></button>
      <button className="-mt-px ml-10 h-[25px] w-16 shrink-0 border-x border-b-2 border-x-[#999] border-b-[#217346] bg-white text-[#217346]">成绩表</button>
      <button className="w-[75px] shrink-0">员工信息</button>
      <span className="mt-1 h-[19px] w-px bg-[#999]" />
      <button className="w-[62px] shrink-0">田字格</button>
      <span className="mt-1 h-[19px] w-px bg-[#999]" />
      <button className="ml-[2px] mt-[2px] h-[22px] w-[111px] shrink-0 bg-[#bdd7ee] leading-5 text-black">XXX公司销售额</button>
      <span className="ml-[2px] mt-1 h-[19px] w-px bg-[#999]" />
      <button className="ml-[2px] mt-[2px] h-[22px] w-[58px] shrink-0 bg-[#f4b084] leading-5 text-black">课程表</button>
      <span className="ml-[2px] mt-1 h-[19px] w-px bg-[#999]" />
      <button className="w-[67px] shrink-0">Sheet5</button>
      <span className="mt-1 h-[19px] w-px bg-[#999]" />
      <button aria-label="新工作表" className="ml-[33px] mt-[5px]">
        <Svg w={16} h={16}>
          <circle cx="8" cy="8" r="7.500" stroke="#777" />
          <path d="M8 4v8M4 8h8" stroke="#777" strokeWidth="2" />
        </Svg>
      </button>
      <div className="flex-1" />
      <div className="mr-[15px] mt-2 flex flex-col gap-[2px]">
        {[0, 1, 2].map((n) => <span key={n} className="size-[2px] bg-[#aaa]" />)}
      </div>
      <div className="mt-[6px] flex h-[15px] w-[449px] shrink-0 bg-[#dadada]">
        <ScrollButton label="向左滚动" d="M6 0v8L2 4z" />
        <div className="w-[218px] border border-[#ababab] bg-white" />
        <div className="flex-1" />
        <ScrollButton label="向右滚动" d="M2 0v8l4-4z" />
      </div>
    </div>
  );
}

function Workbook() {
  return (
    <div className="flex min-w-0 flex-1 flex-col">
      <div className="flex min-h-0 flex-1">
        <div className="relative min-w-0 flex-1 overflow-hidden border-b border-[#999] bg-white">
          <Grid />
          <span className="pointer-events-none absolute left-[582px] top-[173px] h-7 w-[109px] border-2 border-[#217346]" />
          <PivotChart />
          <Slicer title="班级" items={['1班', '2班', '3班']} frame="left-[753px] h-[176px] border-[#ed7d31]" line="border-[#ed7d31]" fill="bg-[#f8cbad]" />
          <Slicer title="科目" items={['数学', '英语', '语文']} frame="left-[902px] h-[178px] border-[#5b9bd5]" line="border-[#5b9bd5]" fill="bg-[#bdd7ee]" />
          <MiniToolbar />
          <ContextMenu />
          <Pointer />
          <MouseCursor />
        </div>
        <div className="flex w-[21px] shrink-0 flex-col px-[3px] pt-[2px]">
          <ScrollButton label="向上滚动" d="M0 6h8L4 2z" />
          <div className="flex min-h-0 flex-1 flex-col bg-[#dadada]">
            <div className="mt-[256px] h-[246px] border border-[#ababab] bg-white" />
          </div>
          <ScrollButton label="向下滚动" d="M0 2h8L4 6z" />
        </div>
      </div>
      <SheetTabs />
    </div>
  );
}

/* ---------- pivot field pane ---------- */

function Check({ id, label, checked, bold = false }: { id: string; label: string; checked: boolean; bold?: boolean }) {
  return (
    <div className="relative flex h-[21px] items-center gap-[6px]">
      <input id={id} type="checkbox" defaultChecked={checked} className="size-[13px] shrink-0 appearance-none border border-[#ababab] bg-white" />
      {checked && (
        <svg width="9" height="8" viewBox="0 0 9 8" fill="none" className="pointer-events-none absolute left-[2px]" aria-hidden="true">
          <path d="M.7 4L3.300 6.700 8.300.7" stroke="#777" strokeWidth="1.700" />
        </svg>
      )}
      <label htmlFor={id} className={bold ? 'font-bold text-[#333]' : ''}>{label}</label>
    </div>
  );
}

function Area({ title, icon, head, frame, items = [] }: { title: string; icon: ReactNode; head: string; frame: string; items?: string[] }) {
  return (
    <div className={frame}>
      <div className={`flex items-center gap-[7px] pl-1 ${head}`}>
        <span className="flex w-3 shrink-0 justify-center">{icon}</span>
        {title}
      </div>
      <div className="flex h-[109px] flex-col gap-[2px] bg-[#fdfdfd] p-px pt-[2px]">
        {items.map((item) => (
          <button key={item} className="flex h-[23px] items-center justify-between border border-[#ababab] pl-[6px] pr-[9px]">
            {item}
            <svg width="8" height="4" viewBox="0 0 8 4" aria-hidden="true"><path d="M0 0h8L4 4z" fill="#000" /></svg>
          </button>
        ))}
      </div>
    </div>
  );
}

function FieldPane() {
  return (
    <aside className="flex w-[255px] shrink-0 flex-col border-l border-[#bcbcbc] pl-3 pr-2 text-[#444]">
      <div className="-mr-[2px] mt-[13px] flex items-start">
        <h2 className="flex-1 text-[21px] leading-7 text-[#217346]">数据透视表字段</h2>
        <button aria-label="任务窗格选项" className="mr-2 mt-2"><BigCaret /></button>
        <button aria-label="关闭窗格" className="mt-[5px]">
          <Svg w={11} h={11}><path d="M1 1l9 9M10 1l-9 9" stroke="#666" strokeWidth="2.200" /></Svg>
        </button>
      </div>
      <div className="mt-[6px] flex h-[27px] items-center justify-between">
        选择要添加到报表的字段:
        <button aria-label="工具" className="flex h-full w-11 items-center justify-end gap-[9px] border border-[#ababab] bg-[#fdfdfd] pr-1">
          <Svg w={13} h={13}>
            <circle cx="6.500" cy="6.500" r="3.700" stroke="#999" strokeWidth="2.600" />
            <path d="M6.500 0v2.500M6.500 10.500V13M.9 3.200l2.200 1.300M9.900 8.500l2.200 1.300M.9 9.800l2.200-1.300M9.900 4.500l2.200-1.300" stroke="#999" strokeWidth="2.600" />
          </Svg>
          <svg width="7" height="4" viewBox="0 0 7 4" aria-hidden="true"><path d="M0 0h7L3.500 4z" fill="#666" /></svg>
        </button>
      </div>
      <div className="relative mt-[14px] h-[22px] shrink-0">
        <input aria-label="搜索" placeholder="搜索" className="h-full w-full border border-[#ababab] bg-white pb-[3px] pl-px outline-none placeholder:text-[#666]" />
        <span className="absolute right-[2px] top-1"><SearchIcon /></span>
      </div>
      <div className="mt-[18px] min-h-0 flex-1 bg-[#fdfdfd] pl-[2px]">
        <div className="-mt-[2px]">
          <Check id="f-class" label="班级" checked bold />
          <Check id="f-subject" label="科目" checked bold />
          <Check id="f-average" label="平均分" checked bold />
        </div>
        <a href="#more" className="mt-[11px] block leading-4">更多表格...</a>
      </div>
      <div className="ml-[2px] mt-[15px] border-t border-dotted border-[#bbb]" />
      <p className="ml-1 mt-[5px] leading-4">在以下区域间拖动字段:</p>
      <div className="-mr-px ml-[3px] mt-[18px] grid grid-cols-[116px_1fr]">
        <Area
          title="筛选器"
          head="h-[23px] pb-1"
          frame="border-b border-r border-[#b3b3b3] pb-[6px] pr-[5px]"
          icon={<svg width="11" height="11" viewBox="0 0 11 11"><path d="M0 0h11v1L7 5.500V11H4V5.500L0 1z" fill="#999" /></svg>}
        />
        <Area
          title="列"
          head="h-[23px] pb-1"
          frame="border-b border-[#b3b3b3] pb-[6px] pl-[2px]"
          icon={<svg width="10" height="10" viewBox="0 0 10 10"><path d="M0 0h3v10H0zM4 0h1v10H4zM6 0h1v10H6zM8 0h1v10H8z" fill="#888" /></svg>}
        />
        <Area
          title="行"
          head="h-[29px]"
          frame="border-r border-[#b3b3b3] pr-[5px]"
          items={['班级', '科目']}
          icon={<svg width="10" height="9" viewBox="0 0 10 9"><path d="M0 0h10v3H0zM0 4h10v1H0zM0 6h10v1H0zM0 8h10v1H0z" fill="#888" /></svg>}
        />
        <Area
          title="值"
          head="h-[29px]"
          frame="pl-[2px]"
          items={['平均值项:平均...']}
          icon={<svg width="10" height="10" viewBox="0 0 10 10" fill="none"><path d="M8.500 2.500V1H1.500l4 4-4 4h7V7.500" stroke="#888" strokeWidth="1.300" /></svg>}
        />
      </div>
      <div className="mb-[11px] ml-[3px] mt-[21px] flex h-[25px] items-center justify-between">
        <Check id="defer" label="推迟布局更新" checked={false} />
        <button disabled className="h-[25px] w-[35px] border border-[#ddd] bg-[#fdfdfd] text-[#aaa]">更新</button>
      </div>
    </aside>
  );
}

/* ---------- status bar ---------- */

function StatusBar() {
  return (
    <footer className="flex h-[17px] shrink-0 items-start overflow-hidden border-t border-[#c0c0c0] bg-[#f1f1f1] leading-4 text-[#444]">
      <span className="ml-[7px]">就绪</span>
      <span className="ml-[19px]">数字</span>
      <button aria-label="录制宏" className="ml-[17px] mt-[3px]">
        <Svg w={14} h={13}>
          <path d="M2.500 2.500h10v10h-10z" fill="#fff" stroke="#777" />
          <circle cx="3" cy="3" r="3" fill="#777" />
          <path d="M4 7.500h7M4 9.500h7M4 11h7" stroke="#777" strokeDasharray="2 1" />
        </Svg>
      </button>
      <div className="flex-1" />
      <button aria-label="普通" className="flex h-[17px] w-[38px] justify-center bg-[#c6c6c6] pt-[3px]">
        <Svg w={13} h={12}><path d="M.5.500h12v11H.5zM.5 4.500h12M.5 8.500h12M4.500.500v11M8.500.500v11" stroke="#555" /></Svg>
      </button>
      <button aria-label="页面布局视图" className="flex w-[38px] justify-center pt-[3px]">
        <Svg w={13} h={12}><path d="M.5.500h12v11H.5zM3.500 2.500h6v7h-6zM5 4.500h3M5 6.500h3" stroke="#666" /></Svg>
      </button>
      <button aria-label="分页预览" className="flex w-[38px] justify-center pt-[3px]">
        <Svg w={13} h={12}><path d="M.5.500h12v11H.5zM4.500.500v7h4v-7" stroke="#666" /></Svg>
      </button>
      <button aria-label="缩小" className="ml-1 mt-[9px] h-[2px] w-[7px] bg-[#555]" />
      <input
        type="range"
        aria-label="缩放"
        min="0"
        max="100"
        defaultValue="40"
        className="ml-1 mt-[3px] h-[13px] w-[100px] appearance-none bg-[linear-gradient(#aaa,#aaa)] bg-[length:100%_1px] bg-center bg-no-repeat [&::-webkit-slider-thumb]:h-[11px] [&::-webkit-slider-thumb]:w-1 [&::-webkit-slider-thumb]:appearance-none [&::-webkit-slider-thumb]:bg-[#555]"
      />
      <button aria-label="放大" className="ml-1 mt-[6px]">
        <Svg w={8} h={8}><path d="M0 4h8M4 0v8" stroke="#555" strokeWidth="2" /></Svg>
      </button>
      <span className="ml-[15px] w-[39px]">80%</span>
    </footer>
  );
}

function Watermark() {
  return (
    <div className="pointer-events-none absolute bottom-2 right-[9px] flex items-center gap-[3px] opacity-85">
      <Svg w={42} h={42}>
        <path d="M40 1C24 2 1 10 2 25c1 7 8 10 14 7 6-3 10-9 7-12-3-2-7 1-9 5 0-6 7-10 12-7 5 4 0 15-8 18C9 40-1 34 1 24 3 8 22-1 40 1z" fill="#3f87c8" />
        <path d="M28 1C14 8 5 18 7 25c1-8 10-18 21-24z" fill="#6aa9dc" />
        <path d="M5 41c9 1 28-2 33-14 3-8-3-14-11-12 6 3 6 11 0 17-6 5-14 8-22 9z" fill="#5cba6a" />
        <path d="M5 41c7 0 13-2 18-6-3-1-7 3-18 6z" fill="#d4cf52" />
      </Svg>
      <div className="flex w-[107px] flex-col whitespace-nowrap">
        <span className="text-[21px] font-bold leading-[24px] text-[#5a9ad6]">极光下载站</span>
        <span className="font-['Liberation_Sans',sans-serif] text-[17px] leading-[17px] font-medium text-[#5cb46c]">www.xz7.com</span>
      </div>
    </div>
  );
}

export default function App() {
  return (
    <div className="relative h-screen overflow-hidden border-l border-[#b5b5b5] bg-[#e6e6e6] font-['Noto_Sans','Noto_Sans_CJK_SC',sans-serif] text-[12px] leading-4">
      <div className="flex h-full flex-col border-l border-[#217346]">
        <Header />
        <Ribbon />
        <QuickAccess />
        <FormulaBar />
        <main className="flex min-h-0 flex-1">
          <Workbook />
          <FieldPane />
        </main>
        <StatusBar />
      </div>
      <Watermark />
    </div>
  );
}
